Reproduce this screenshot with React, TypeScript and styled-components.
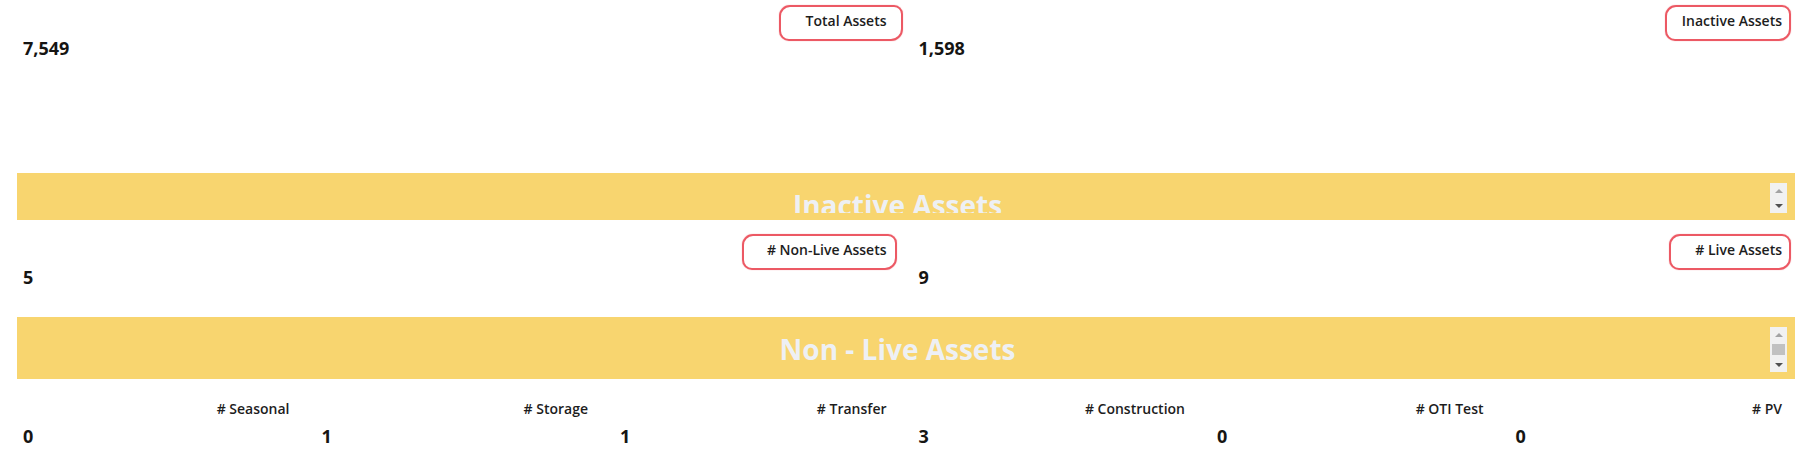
import React from "react";
import styled, { createGlobalStyle } from "styled-components";

const GlobalStyle = createGlobalStyle`
  html, body {
    margin: 0;
    padding: 0;
    background: #ffffff;
    font-family: "Open Sans", "Noto Sans", Arial, sans-serif;
    color: #161513;
  }
`;

const Page = styled.div`
  display: flex;
  flex-direction: column;
  padding: 0 11px 0 17px;
`;

const StatGrid = styled.div<{ $cols: number; $minHeight?: number; $top: number; $bottom: number }>`
  display: grid;
  grid-template-columns: repeat(${({ $cols }) => $cols}, 1fr);
  column-gap: 20px;
  padding: ${({ $top }) => $top}px 7px ${({ $bottom }) => $bottom}px 0;
  min-height: ${({ $minHeight }) => ($minHeight ? `${$minHeight}px` : "auto")};
  box-sizing: border-box;
`;

const StatCard = styled.div`
  display: flex;
  flex-direction: column;
  padding: 0 6px;
`;

const LabelRow = styled.div`
  display: flex;
  justify-content: flex-end;
`;

const Label = styled.span<{ $markLeft?: number; $markRight?: number }>`
  position: relative;
  font-size: 14px;
  line-height: 19px;
  font-weight: 600;
  color: #1d1d1d;
  white-space: nowrap;

  ${({ $markLeft, $markRight }) =>
    $markLeft !== undefined
      ? `
    &::before {
      content: "";
      position: absolute;
      top: -6px;
      bottom: -11px;
      left: -${$markLeft}px;
      right: -${$markRight ?? 10}px;
      border: 2.5px solid rgba(232, 52, 66, 0.82);
      border-radius: 11px 9px 12px 10px;
      box-shadow: 0 0 1px rgba(232, 52, 66, 0.6);
      pointer-events: none;
    }
  `
      : ""}
`;

const Value = styled.div`
  margin-top: 6px;
  font-size: 18px;
  line-height: 24px;
  font-weight: 700;
  color: #161513;
`;

const Band = styled.div<{ $height: number }>`
  background: #f8d56f;
  padding: 10px 8px 7px 8px;
  display: flex;
  height: ${({ $height }) => $height}px;
`;

const BandTitleWrap = styled.div`
  flex: 1;
  overflow: hidden;
`;

const BandTitle = styled.h2`
  margin: 0;
  text-align: center;
  font-size: 28px;
  line-height: 45px;
  font-weight: 700;
  color: #eef0f4;
  white-space: nowrap;
`;

const Scrollbar = styled.div`
  width: 17px;
  background: #f1f1f1;
  display: flex;
  flex-direction: column;
`;

const ScrollButton = styled.div`
  height: 15px;
  display: flex;
  align-items: center;
  justify-content: center;
  flex-shrink: 0;
`;

const Arrow = styled.span<{ $dir: "up" | "down"; $dim?: boolean }>`
  width: 0;
  height: 0;
  border-left: 4px solid transparent;
  border-right: 4px solid transparent;
  ${({ $dir, $dim }) =>
    $dir === "up"
      ? `border-bottom: 4px solid ${$dim ? "#a3a3a3" : "#505050"};`
      : `border-top: 4px solid ${$dim ? "#a3a3a3" : "#505050"};`}
`;

const ScrollTrack = styled.div`
  flex: 1;
  display: flex;
  padding: 2px;
`;

const ScrollThumb = styled.div`
  flex: 1;
  background: #c1c1c1;
`;

type Stat = { label: string; value: string; markLeft?: number; markRight?: number };

const topStats: Stat[] = [
  { label: "Total Assets", value: "7,549", markLeft: 27, markRight: 16 },
  { label: "Inactive Assets", value: "1,598", markLeft: 17, markRight: 9 },
];

const liveStats: Stat[] = [
  { label: "# Non-Live Assets", value: "5", markLeft: 25, markRight: 10 },
  { label: "# Live Assets", value: "9", markLeft: 26, markRight: 9 },
];

const nonLiveStats: Stat[] = [
  { label: "# Seasonal", value: "0" },
  { label: "# Storage", value: "1" },
  { label: "# Transfer", value: "1" },
  { label: "# Construction", value: "3" },
  { label: "# OTI Test", value: "0" },
  { label: "# PV", value: "0" },
];

const StatRow: React.FC<{ stats: Stat[]; minHeight?: number; top: number; bottom: number }> = ({
  stats,
  minHeight,
  top,
  bottom,
}) => (
  <StatGrid $cols={stats.length} $minHeight={minHeight} $top={top} $bottom={bottom}>
    {stats.map((s) => (
      <StatCard key={s.label}>
        <LabelRow>
          <Label $markLeft={s.markLeft} $markRight={s.markRight}>
            {s.label}
          </Label>
        </LabelRow>
        <Value>{s.value}</Value>
      </StatCard>
    ))}
  </StatGrid>
);

const RegionBand: React.FC<{ title: string; height: number; thumb?: boolean }> = ({ title, height, thumb }) => (
  <Band $height={height - 17}>
    <BandTitleWrap>
      <BandTitle>{title}</BandTitle>
    </BandTitleWrap>
    <Scrollbar>
      <ScrollButton>
        <Arrow $dir="up" $dim />
      </ScrollButton>
      {thumb ? (
        <ScrollTrack>
          <ScrollThumb />
        </ScrollTrack>
      ) : null}
      <ScrollButton>
        <Arrow $dir="down" />
      </ScrollButton>
    </Scrollbar>
  </Band>
);

const App: React.FC = () => {
  return (
    <>
      <GlobalStyle />
      <Page>
        <StatRow stats={topStats} minHeight={173} top={11} bottom={0} />
        <RegionBand title="Inactive Assets" height={47} />
        <StatRow stats={liveStats} top={20} bottom={28} />
        <RegionBand title="Non - Live Assets" height={62} thumb />
        <StatRow stats={nonLiveStats} top={20} bottom={20} />
      </Page>
    </>
  );
};

export default App;
